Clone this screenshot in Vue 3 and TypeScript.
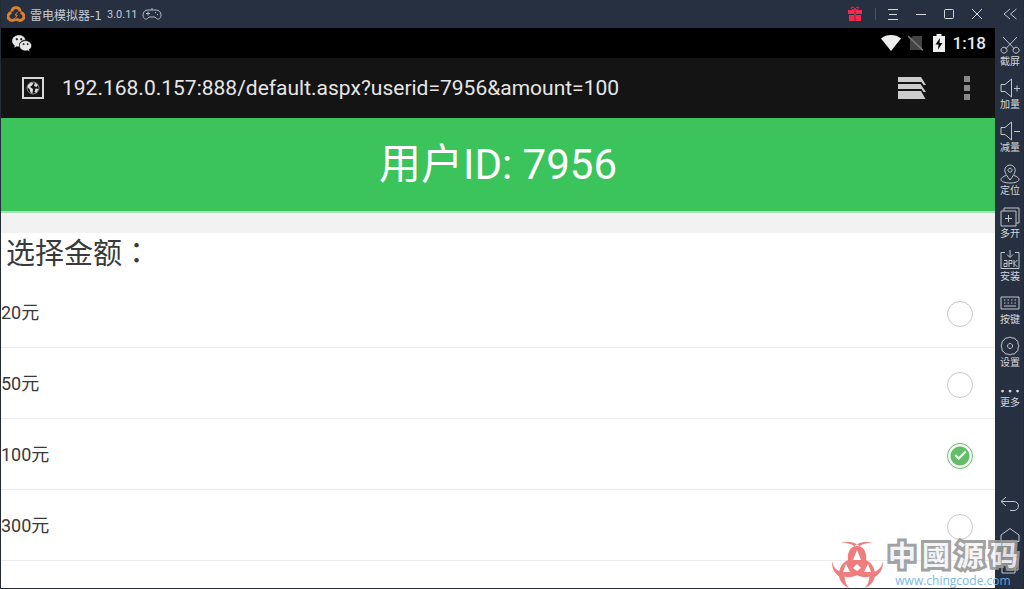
<script setup lang="ts">
import { ref } from 'vue'

interface Tool {
  label: string
  path: string
  filled?: boolean
}

const address = ref('192.168.0.157:888/default.aspx?userid=7956&amount=100')
const userId = ref('7956')
const amounts: number[] = [20, 50, 100, 300]
const selected = ref(100)
const brand: string[] = ['中', '國', '源', '码']

const tools: Tool[] = [
  { label: '截屏', path: 'M3 2 L14.5 14 M17 2 L5.5 14 M4 12.2a3 3 0 1 0 .1 0z M16 12.2a3 3 0 1 0 .1 0z' },
  { label: '加量', path: 'M1 6.5h4L11.5 1v18L5 13.5H1z M14 10.5h6 M17 7.5v6' },
  { label: '减量', path: 'M1 6.5h4L11.5 1v18L5 13.5H1z M14 10.5h6' },
  { label: '定位', path: 'M10 16C7 12 4.800 9 4.800 6.200a5.200 5.200 0 0 1 10.400 0C15.200 9 13 12 10 16z M10 4.200a2 2 0 1 0 .1 0z M6 11.500C3 12.500 1 14 1 15.500C1 17.500 5 19 10 19s9-1.500 9-3.500c0-1.500-2-3-5-4' },
  { label: '多开', path: 'M1 4h15v15H1z M4 4V1h15v15h-3 M8.500 8v7 M5 11.500h7' },
  { label: '安装', path: 'M5 2.500H1v16h18v-16h-4 M10 0v7 M7 4.500l3 3 3-3 M4 10.500h3v6H4v-3h3 M9 17v-6.500h3v3H9 M14 10v7 M17.500 10L14 13.500l3.500 3.500' },
  { label: '按键', path: 'M1 4h18v12H1z M4 7h1.500M7.500 7H9M11 7h1.500M14.500 7H16 M4 10h1.500M7.500 10H9M11 10h1.500M14.500 10H16 M4 13h12' },
  { label: '设置', path: 'M10 1l2 1 2.500 0 1.500 2 2 1.500v2.500l1 2-1 2V14.500l-2 1.500-1.500 2H12l-2 1-2-1H5.500L4 16l-2-1.500V12l-1-2 1-2V5.500L4 4l1.500-2H8z M10 7.500a2.500 2.500 0 1 0 .1 0z' },
  { label: '更多', path: 'M2.500 3.700a1.400 1.400 0 1 0 .1 0z M10 3.700a1.400 1.400 0 1 0 .1 0z M17.500 3.700a1.400 1.400 0 1 0 .1 0z', filled: true },
]
</script>

<template>
  <div class="emulator">
    <div class="window">
      <header class="titlebar">
        <svg class="logo" viewBox="0 0 18 18" aria-hidden="true">
          <path d="M5 6.500a4 4 0 0 1 8 0 M4.500 7.500a4 4 0 1 0 4 6 M13.500 7.500a4 4 0 1 1-4 6" />
          <path class="bolt" d="M10.500 7L8 10h2.300l-1.800 3" />
        </svg>
        <span class="name">雷电模拟器-1</span>
        <span class="version">3.0.11</span>
        <svg class="pad" viewBox="0 0 20 14" aria-hidden="true">
          <path d="M6 3h8c3 0 5 2 5 5 0 4-3 5-4.500 3.500L13 10H7l-1.500 1.500C4 13 1 12 1 8c0-3 2-5 5-5z M10 3V1 M4 6.500h4 M6 4.500v4 M13 5.500h1 M15 7.500h1" />
        </svg>
        <div class="controls">
          <button class="gift" type="button" aria-label="礼包">
            <svg viewBox="0 0 14 16">
              <path d="M0 4h6v4H0z M8 4h6v4H8z M1 9h5v6H1z M8 9h5v6H8z M6.300 4h1.400v11H6.300z" />
              <path class="bow" d="M7 4C3 4 2 1.500 4 1s3 3 3 3 1-3.500 3-3 1 3-3 3" />
            </svg>
          </button>
          <i class="divider"></i>
          <button type="button" aria-label="菜单"><svg viewBox="0 0 12 12"><path d="M1 1.500h10M2 6.500h8M1 11.500h10" /></svg></button>
          <button type="button" aria-label="最小化"><svg viewBox="0 0 12 12"><path d="M1 6.500h10" /></svg></button>
          <button type="button" aria-label="最大化"><svg viewBox="0 0 12 12"><rect x="1.500" y="1.500" width="9" height="9" rx="1" /></svg></button>
          <button type="button" aria-label="关闭"><svg viewBox="0 0 12 12"><path d="M1 1l10 10M11 1L1 11" /></svg></button>
        </div>
      </header>

      <div class="status">
        <svg class="wechat" viewBox="0 0 20 17" aria-hidden="true">
          <path d="M7 0C3 0 0 2.500 0 6c0 2 1 3.400 2.500 4.500L2 13l2.700-1.500c1 .3 1.800.3 2.800.2C6.500 8 9.500 5 13.700 5 13 2 10.300 0 7 0z" />
          <path d="M13.500 5.800c-3.500 0-6 2.200-6 4.900 0 2.800 2.700 5 6 5 .7 0 1.400-.1 2-.3l2.200 1.200-.6-2c1.500-1 2.400-2.300 2.400-3.900 0-2.700-2.500-4.900-6-4.900z" />
          <path class="eyes" d="M4 3.500h1.500V5H4z M8.500 3.500H10V5H8.500z M11 8.500h1.200v1.200H11z M15 8.500h1.200v1.200H15z" />
        </svg>
        <div class="signals">
          <svg class="wifi" viewBox="0 0 20 16" aria-hidden="true"><path d="M0 3.500C5.500-1.100 14.500-1.100 20 3.500L10 16z" /></svg>
          <svg class="nosim" viewBox="0 0 16 16" aria-hidden="true"><path d="M5 1h9v14H2V4z" /><path class="slash" d="M0 1l15 14.500" /></svg>
          <svg class="battery" viewBox="0 0 12 18" aria-hidden="true"><path d="M3.500 0h5v2H12v16H0V2h3.500z" /><path class="spark" d="M7 4L2.500 10.500h3L5 15.500 9.500 9h-3z" /></svg>
          <time>1:18</time>
        </div>
      </div>

      <div class="browser">
        <span class="favicon">
          <svg viewBox="0 0 14 14" aria-hidden="true">
            <circle cx="7" cy="7" r="6" />
            <path d="M2 4l3-2.500 2.500.5L6 4.500 4 6l3 2-.5 4.500-2-1L3.500 8 1.500 6.500z M9 1.500L12 4l-1.500 2L8 5z M9.500 7.500l3 .5-2 4-2-1z" />
          </svg>
        </span>
        <input v-model="address" class="address" type="text" aria-label="网址" spellcheck="false" />
        <button class="tabs" type="button" aria-label="标签页">
          <svg viewBox="0 0 28 22"><path d="M0 0h23l5 8h-2.500l-2-3H0z M0 7h22.500l5.500 8h-2.500l-2-3H0z M0 14h23l4.500 8H0z" /></svg>
        </button>
        <button class="more" type="button" aria-label="更多选项">
          <svg viewBox="0 0 6 24"><path d="M0 0h6v6H0z M0 9h6v6H0z M0 18h6v6H0z" /></svg>
        </button>
      </div>

      <main>
        <h1>用户ID: {{ userId }}</h1>
        <fieldset>
          <legend>选择金额：</legend>
          <label v-for="amount in amounts" :key="amount" class="option">
            <span>{{ amount }}元</span>
            <input v-model="selected" type="radio" name="amount" :value="amount" />
          </label>
        </fieldset>
      </main>
    </div>

    <aside>
      <button class="collapse" type="button" aria-label="收起">
        <svg viewBox="0 0 14 12"><path d="M7 1L1 6l6 5M13.500 1l-6 5 6 5" /></svg>
      </button>
      <nav class="tools" aria-label="工具">
        <button v-for="tool in tools" :key="tool.label" type="button" :class="{ dots: tool.filled }">
          <svg :viewBox="tool.filled ? '0 0 20 10' : '0 0 20 20'"><path :d="tool.path" /></svg>
          <span>{{ tool.label }}</span>
        </button>
      </nav>
      <nav class="keys" aria-label="导航">
        <button type="button" aria-label="返回"><svg viewBox="0 0 20 16"><path d="M6 1L1 5.500 6 10M1 5.500h13a4.500 4.500 0 0 1 0 9h-4" /></svg></button>
        <button type="button" aria-label="主页"><svg viewBox="0 0 20 16"><path d="M1 14.500V8l9-6.500L19 8v6.500z" /></svg></button>
        <button type="button" aria-label="最近任务"><svg viewBox="0 0 20 16"><path d="M2 4h13v11H2z M5 4V1h13v11h-3" /></svg></button>
      </nav>
    </aside>

    <div class="watermark">
      <svg viewBox="0 0 51 47" aria-hidden="true">
        <g class="horns">
          <path d="M25 5c7 0 10 7 9 14 5 2 9 8 9 14-6 4-13 4-18 1-5 3-12 3-18-1 0-6 4-12 9-14-1-7 2-14 9-14z" />
          <path d="M9 2C17-.5 26 1 31 9l-4 1C22 3 17 1.500 9 2z M41 2C33-.5 24 1 19 9l4 1C28 3 33 1.500 41 2z" />
          <path d="M0 20c1 6 4 9 9 11l-1 5C2 32-.5 26 0 20z M51 20c-1 6-4 9-9 11l1 5c6-4 8.500-10 8-16z" />
          <path d="M7 31c-1 7 3 13 10 16-3-4-5-8-4-14z M43 31c1 7-3 13-10 16 3-4 5-8 4-14z" />
        </g>
        <path class="holes" d="M25 9l4 10h-8z M14 23l4 8h-7z M36 23l-4 8h7z M25 23l4 4-4 3-4-3z" />
      </svg>
      <div class="brand">
        <strong><span v-for="char in brand" :key="char">{{ char }}</span></strong>
        <a href="http://www.chingcode.com">www.chingcode.com</a>
      </div>
    </div>
  </div>
</template>

<style>
body {
  margin: 0;
}
</style>

<style scoped>
.emulator {
  position: relative;
  display: flex;
  min-height: 100vh;
  box-sizing: border-box;
  overflow: hidden;
  border: solid #242b35;
  border-width: 0 1px 1px;
  background: #273040;
  color: #3a3a3a;
  font-family: Roboto, "Noto Sans CJK SC", sans-serif;
}
button {
  display: flex;
  align-items: center;
  justify-content: center;
  padding: 0;
  border: 0;
  background: none;
  color: inherit;
  font: inherit;
}
svg {
  display: block;
  flex: none;
  fill: none;
}
.window {
  display: flex;
  flex: 1;
  flex-direction: column;
  min-width: 0;
  background: #fff;
}
.titlebar {
  display: flex;
  align-items: center;
  height: 28px;
  padding-left: 6px;
  background: #273040;
  color: #c6cad0;
}
.logo {
  width: 18px;
  height: 18px;
  stroke: #d9822b;
  stroke-width: 3;
}
.bolt {
  stroke-width: 1;
}
.name {
  margin-left: 5px;
  font-family: "DejaVu Sans", "Noto Sans CJK SC", sans-serif;
  font-size: 12px;
}
.version {
  margin: 0 4px 0 5px;
  font-size: 11px;
}
.pad {
  width: 20px;
  height: 14px;
  stroke: #b4b8be;
}
.controls {
  display: flex;
  align-items: center;
  margin-left: auto;
  padding-right: 4px;
  stroke: #d4d7dc;
}
.controls button {
  width: 28px;
  height: 28px;
}
.controls svg {
  width: 12px;
  height: 12px;
}
.controls .gift svg {
  width: 14px;
  height: 16px;
  fill: #f5294c;
  stroke: none;
}
.gift .bow {
  fill: none;
  stroke: #f5294c;
}
.divider {
  width: 1px;
  height: 12px;
  margin: 0 3px 0 6px;
  background: #4b5361;
}
.status {
  display: flex;
  align-items: center;
  justify-content: space-between;
  height: 30px;
  padding: 0 9px 0 11px;
  background: #000;
}
.wechat {
  width: 20px;
  height: 17px;
  fill: #e8e8e8;
  stroke: #000;
  stroke-width: 0.4;
}
.eyes {
  fill: #222;
}
.signals {
  display: flex;
  align-items: center;
  color: #e8e8e8;
}
.wifi {
  width: 20px;
  height: 16px;
  fill: #eee;
}
.nosim {
  width: 16px;
  height: 16px;
  margin-left: 7px;
  fill: #444;
}
.slash {
  stroke: #777;
  stroke-width: 1.5;
}
.battery {
  width: 12px;
  height: 18px;
  margin: 0 8px 0 9px;
  fill: #eee;
}
.spark {
  fill: #000;
}
time {
  font-size: 17px;
  font-weight: 500;
}
.browser {
  display: flex;
  align-items: center;
  height: 60px;
  padding: 0 25px 0 21px;
  background: #141414;
}
.favicon {
  display: grid;
  place-items: center;
  width: 18px;
  height: 18px;
  border: 2px solid #d8d8d8;
}
.favicon svg {
  width: 14px;
  height: 14px;
  stroke: #888;
}
.favicon path {
  fill: #ddd;
  stroke: none;
}
.address {
  flex: 1;
  min-width: 0;
  margin-left: 18px;
  padding: 0;
  border: 0;
  outline: 0;
  background: none;
  color: #e6e6e6;
  font: 21px Roboto, sans-serif;
}
.tabs svg {
  width: 28px;
  height: 22px;
  fill: #ccc;
}
.more {
  margin-left: 38px;
}
.more svg {
  width: 6px;
  height: 24px;
  fill: #8a8a8a;
}
h1 {
  margin: 0;
  border-bottom: 2px solid #a9dfb5;
  background: #3bc45c;
  color: #fff;
  font-size: 42px;
  font-weight: 400;
  line-height: 93px;
  text-align: center;
}
fieldset {
  margin: 0;
  padding: 0;
  border: 0;
  border-top: 20px solid #f2f2f2;
}
legend {
  float: left;
  width: 100%;
  box-sizing: border-box;
  padding: 0 5px 2px;
  font-family: Roboto, "Noto Sans CJK TC", sans-serif;
  font-size: 29px;
  line-height: 42px;
}
.option {
  display: flex;
  clear: both;
  align-items: center;
  justify-content: space-between;
  height: 70px;
  padding-right: 22px;
  border-bottom: 1px solid #ececec;
  font-size: 18px;
}
.option span {
  padding-bottom: 2px;
}
.option input {
  display: grid;
  place-items: center;
  width: 26px;
  height: 26px;
  margin: 3px 0 0;
  border: 1px solid #c8c8c8;
  border-radius: 50%;
  appearance: none;
}
.option input:checked {
  border-color: #62bf68;
  background: radial-gradient(circle, #62bf68 9px, #fff 10px);
}
.option input:checked::after {
  width: 9px;
  height: 4px;
  margin-bottom: 4px;
  border: solid #fff;
  border-width: 0 0 2px 2px;
  content: "";
  transform: rotate(-45deg);
}
aside {
  display: flex;
  flex-direction: column;
  box-sizing: border-box;
  width: 28px;
  padding-left: 2px;
  background: #273040;
  color: #d4d7dc;
  stroke: #c2c6cc;
}
.collapse {
  height: 28px;
}
.collapse svg {
  width: 14px;
  height: 12px;
}
.tools {
  display: flex;
  flex-direction: column;
  gap: 9px;
  padding-top: 7px;
}
.tools button {
  flex-direction: column;
  font-size: 10px;
  line-height: 14px;
}
.tools svg {
  width: 20px;
  height: 20px;
}
.tools .dots {
  margin-top: 7px;
}
.tools .dots svg {
  height: 10px;
  fill: #d4d7dc;
  stroke: none;
}
.keys {
  display: flex;
  flex-direction: column;
  gap: 15px;
  margin-top: auto;
  padding-bottom: 14px;
}
.keys svg {
  width: 20px;
  height: 16px;
}
.watermark {
  position: absolute;
  right: 5px;
  bottom: 0;
  display: flex;
  align-items: flex-end;
  gap: 5px;
  opacity: 0.9;
}
.watermark svg {
  width: 51px;
  height: 47px;
}
.horns {
  fill: #ee7070;
}
.holes {
  fill: #fff;
}
.brand {
  display: flex;
  flex-direction: column;
  align-items: center;
}
.brand strong {
  display: flex;
  gap: 6px;
  color: #f4f4f8;
  font-size: 28px;
  font-weight: 700;
  line-height: 34px;
  paint-order: stroke;
  -webkit-text-stroke: 6px #999;
}
.brand a {
  color: #6fb1e4;
  font: 12px/14px "Open Sans", sans-serif;
  text-decoration: none;
}
</style>
